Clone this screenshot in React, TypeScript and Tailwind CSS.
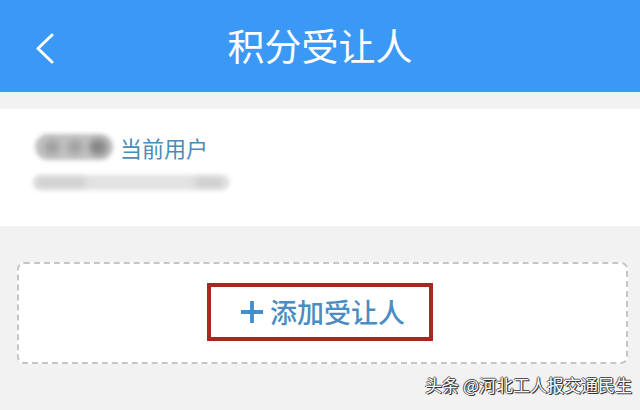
import React from "react";

export default function App() {
  const cjk = { fontFamily: '"Noto Sans CJK SC", "Noto Sans", sans-serif' };
  return (
    <div className="w-[640px] h-[410px] overflow-hidden bg-[#f2f2f2] flex flex-col" style={cjk}>
      {/* Header */}
      <div className="h-[92px] bg-[#3b99f5] relative flex items-center justify-center shrink-0">
        <svg
          className="absolute left-[34px] top-[33px]"
          width="22"
          height="31"
          viewBox="0 0 22 31"
          fill="none"
        >
          <path d="M18 2 L4 15.5 L18 29" stroke="white" strokeWidth="3" strokeLinecap="round" strokeLinejoin="round" />
        </svg>
        <span className="text-white text-[37px] leading-none -mt-[2px]">积分受让人</span>
      </div>
      <div className="h-[17px] bg-[#f2f2f2] border-t border-[#e6f5f6] shrink-0" />
      {/* Current user card */}
      <div className="h-[117px] bg-white shrink-0 pl-[32px] pt-[23px] flex flex-col">
        <div className="flex items-center h-[30px]">
          <div className="relative w-[80px] h-[28px] ml-[2px]">
            <div className="absolute inset-[1px] rounded-full bg-[#c2c2c2] blur-[2px]" />
            <div className="absolute left-[10px] top-[7px] w-[16px] h-[14px] rounded-full bg-[#a0a0a0] blur-[3px]" />
            <div className="absolute left-[33px] top-[7px] w-[16px] h-[14px] rounded-full bg-[#a3a3a3] blur-[3px]" />
            <div className="absolute left-[55px] top-[6px] w-[18px] h-[16px] rounded-full bg-[#878787] blur-[3px]" />
          </div>
          <span className="ml-[6px] text-[22px] leading-none text-[#4a8bb8]">当前用户</span>
        </div>
        <div className="relative mt-[12px] w-[199px] h-[17px]">
          <div className="absolute inset-[1px] rounded-full bg-[#e2e2e2] blur-[2px]" />
          <div className="absolute left-[4px] top-[4px] w-[50px] h-[9px] rounded-full bg-[#cfcfcf] blur-[3px]" />
          <div className="absolute right-[8px] top-[4px] w-[28px] h-[9px] rounded-full bg-[#cdcdcd] blur-[3px]" />
        </div>
      </div>
      {/* Add box */}
      <div className="pt-[36px] px-[17px] shrink-0">
        <div className="h-[102px] w-[611px] bg-white rounded-[7px] border-2 border-dashed border-[#c6c6c6] flex items-center justify-center">
          <div className="w-[226px] h-[58px] border-[4px] border-[#a6281f] flex items-center pl-[29px] -ml-[5px] -mt-[3px]">
            <svg width="24" height="24" viewBox="0 0 24 24" className="mt-[1px]">
              <path d="M12 1 V23 M1 12 H23" stroke="#3f8fd0" strokeWidth="3.8" />
            </svg>
            <span className="ml-[6px] text-[27px] leading-none text-[#4a8cc4] font-medium">添加受让人</span>
          </div>
        </div>
      </div>
      {/* Watermark */}
      <div className="flex justify-end pr-[8px] pt-[12px]">
        <span
          className="text-[17px] leading-none text-white"
          style={{ textShadow: "1px 1px 0 #333, -1px 0 0 #555, 0 -1px 0 #555, 1px 0 0 #444" }}
        >
          头条 @河北工人报交通民生
        </span>
      </div>
    </div>
  );
}
